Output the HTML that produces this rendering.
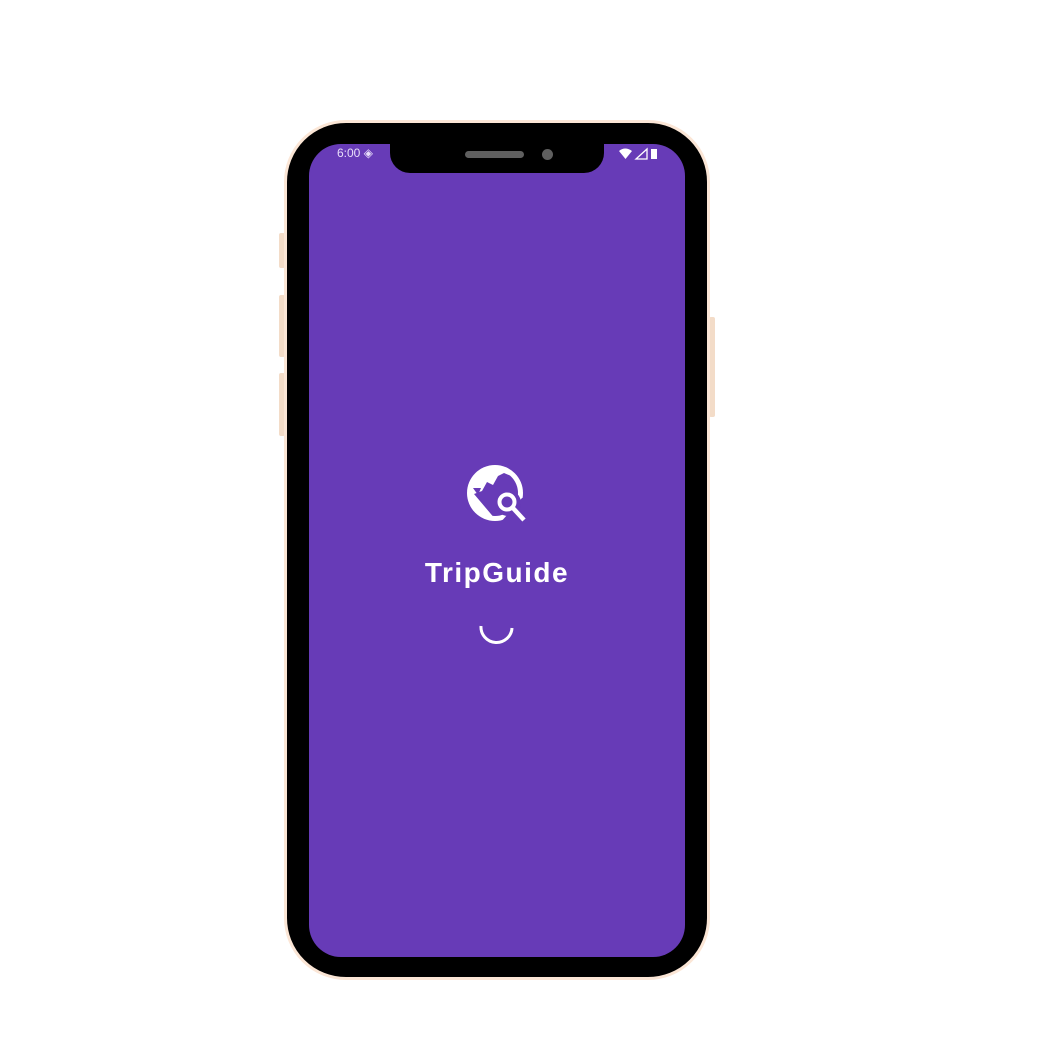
<!DOCTYPE html><html><head><style>
body{margin:0;width:1063px;height:1064px;background:#fff;position:relative;overflow:hidden;font-family:"Liberation Sans",sans-serif}
.b{position:absolute;background:#f3dcc8;border-radius:2px}
.phone{position:absolute;left:284px;top:120px;width:420px;height:854px;border:3px solid #fbe6d6;border-radius:62px;background:#000}
.screen{position:absolute;left:309px;top:144px;width:376px;height:813px;background:#673bb7;border-radius:32px;overflow:hidden}
.notch{position:absolute;left:390px;top:140px;width:214px;height:33px;background:#000;border-radius:0 0 20px 20px}
</style></head><body>
<div class="b" style="left:279px;top:233px;width:6px;height:35px"></div>
<div class="b" style="left:279px;top:295px;width:6px;height:62px"></div>
<div class="b" style="left:279px;top:373px;width:6px;height:63px"></div>
<div class="b" style="left:709px;top:317px;width:6px;height:100px"></div>
<div class="phone"></div>
<div class="screen"></div>
<div class="notch"></div>
<div style="position:absolute;left:465px;top:151px;width:59px;height:7px;background:#5f5f5f;border-radius:4px"></div>
<div style="position:absolute;left:542px;top:149px;width:11px;height:11px;background:#5f5f5f;border-radius:50%"></div>
<div style="position:absolute;left:337px;top:146px;color:#e8defa;font-size:12px">6:00 ◈</div>
<svg style="position:absolute;left:618px;top:147px" width="44" height="14" viewBox="0 0 44 14"><path d="M1 4 Q7 -1 14 4 L7.5 12Z" fill="#fff"/><path d="M29 2 L29 12 L18 12Z" fill="none" stroke="#fff" stroke-width="1.3"/><rect x="33" y="2" width="6" height="10" fill="#fff"/></svg>
<svg style="position:absolute;left:460px;top:458px" width="74" height="70" viewBox="0 0 74 70">
<defs><clipPath id="c"><circle cx="35" cy="35" r="23"/></clipPath></defs>
<circle cx="35" cy="35" r="28" fill="#fff"/>
<path d="M14 36 L22 33 L27 24 L33 27 L38 18 L44 15 L56 20 L62 40 L55 60 L36 62 Z" fill="#673bb7" clip-path="url(#c)"/>
<path d="M13 30 H21 L18 37 Z" fill="#673bb7"/>
<path d="M40 65 L75 65 L75 40 L62 40 Z" fill="#673bb7"/>
<circle cx="48" cy="45" r="13" fill="#673bb7"/>
<circle cx="47" cy="44" r="7.5" fill="none" stroke="#fff" stroke-width="4"/>
<path d="M52 49 L64 62" stroke="#fff" stroke-width="4.5"/>
</svg>
<div style="position:absolute;left:397px;top:557px;width:200px;text-align:center;color:#fff;font-size:28px;font-weight:bold;letter-spacing:1.5px">TripGuide</div>
<svg style="position:absolute;left:476px;top:612px" width="40" height="36"><path d="M5 14 A15 15 0 0 0 36 16" fill="none" stroke="#fff" stroke-width="3"/></svg>
</body></html>
